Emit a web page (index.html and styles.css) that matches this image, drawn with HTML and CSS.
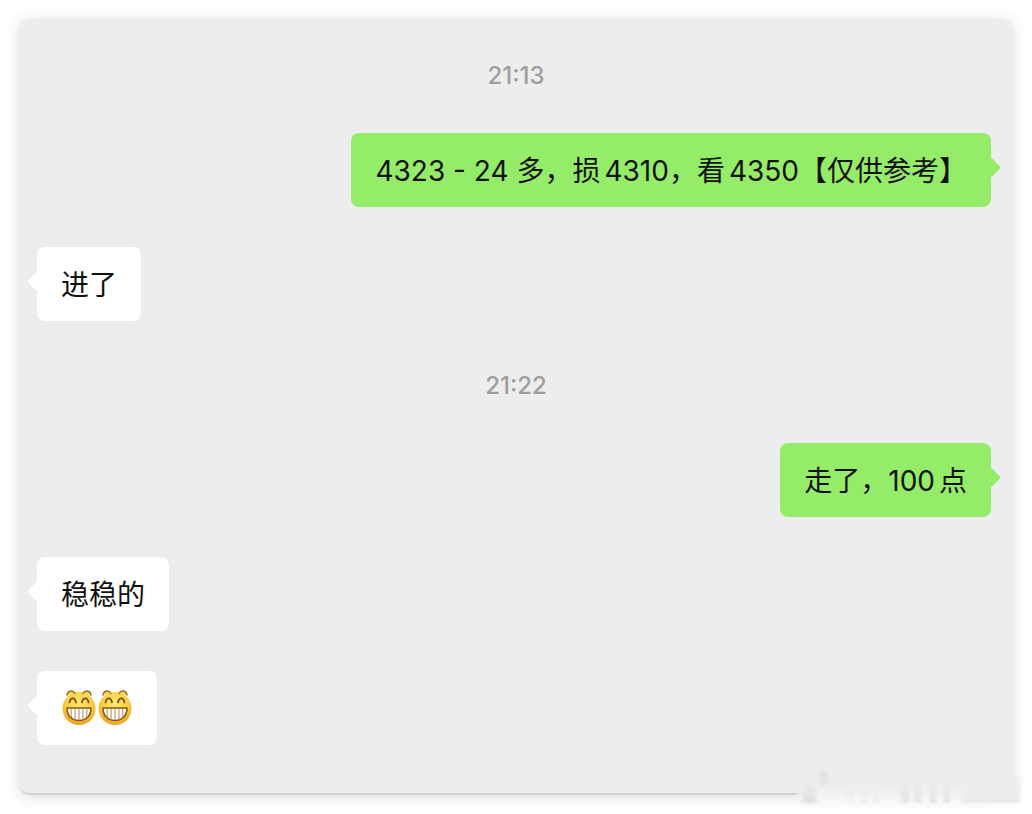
FILE: index.html
```
<!DOCTYPE html>
<html lang="zh-CN">
<head>
    <meta charset="UTF-8">
    <meta name="viewport" content="width=device-width, initial-scale=1.0">
    <title>聊天记录</title>
    <link rel="stylesheet" href="styles.css">
</head>
<body>
    <!-- shared emoji, used twice in the last message -->
    <svg class="defs" width="0" height="0" aria-hidden="true">
        <defs>
            <radialGradient id="face" cx="50%" cy="35%" r="65%">
                <stop offset="0" stop-color="#ffe873"/>
                <stop offset="0.6" stop-color="#fdcf42"/>
                <stop offset="1" stop-color="#f0a01c"/>
            </radialGradient>
            <symbol id="grin" viewBox="0 0 36 36">
                <circle cx="18" cy="18.500" r="16.5" fill="url(#face)"/>
                <path d="M6 5C7 0 12 0 14 3.500M22 3.500C24 0 29 0 30 5" fill="#fdd650" stroke="#9a6a25" stroke-width="1.400" stroke-linecap="round"/>
                <path d="M8.500 12.500C9.500 7 14 7 15 12.500M21 12.500C22 7 26.500 7 27.500 12.500" fill="none" stroke="#7b4a10" stroke-width="1.700" stroke-linecap="round"/>
                <path d="M6 18H30C30 26 25 30.500 18 30.500S6 26 6 18Z" fill="#fff" stroke="#8a5512" stroke-width="1.600" stroke-linejoin="round"/>
                <path d="M10.200 19V27M14.100 19V29.500M18 19V30M21.900 19V29.500M25.800 19V27" stroke="#c39a68" stroke-width="1.200"/>
            </symbol>
        </defs>
    </svg>

    <main class="chat">
        <time class="chat-time">21:13</time>
        <div class="message mine">
            <p class="bubble">4323 - 24 多，<span class="word">损</span>4310，<span class="word">看</span>4350【仅供参考】</p>
        </div>
        <div class="message">
            <p class="bubble">进了</p>
        </div>
        <time class="chat-time">21:22</time>
        <div class="message mine">
            <p class="bubble">走了，<span class="word">100</span>点</p>
        </div>
        <div class="message">
            <p class="bubble">稳稳的</p>
        </div>
        <div class="message">
            <p class="bubble emoji">
                <svg role="img" aria-label="呲牙"><use href="#grin"/></svg>
                <svg role="img" aria-label="呲牙"><use href="#grin"/></svg>
            </p>
        </div>

        <!-- faded stamp over the bottom corner -->
        <svg class="stamp" viewBox="0 0 232 44" aria-hidden="true">
            <defs>
                <linearGradient id="fade" x1="0" y1="0" x2="0" y2="1">
                    <stop offset="0" stop-color="#ececec"/>
                    <stop offset="0.5" stop-color="#f0f0f0"/>
                    <stop offset="1" stop-color="#f8f8f8"/>
                </linearGradient>
                <linearGradient id="bar" x1="0" y1="0" x2="0" y2="1">
                    <stop offset="0" stop-color="#ececec"/>
                    <stop offset="1" stop-color="#dfdfdf"/>
                </linearGradient>
                <filter id="soft" x="-5%" y="-10%" width="110%" height="120%">
                    <feGaussianBlur stdDeviation="2 1"/>
                </filter>
            </defs>
            <g filter="url(#soft)">
                <rect x="8" y="12" width="222" height="26" fill="url(#fade)"/>
                <path d="M12 16H26V38H12Z" fill="url(#bar)"/>
                <path d="M30 5H37V20H30Z" fill="#e2e2e2"/>
                <path d="M112 12H119V38H112ZM125 12H131V38H125ZM140 12H146V38H140ZM154 12H159V38H154Z" fill="url(#bar)"/>
                <path d="M58 16H63V38H58ZM72 16H77V38H72ZM84 16H89V38H84Z" fill="#ededed"/>
                <path d="M171 12H230V38H171Z" fill="#ededed"/>
                <path d="M171 35H230V38H171Z" fill="#e8e8e8"/>
            </g>
        </svg>
    </main>
</body>
</html>
```
FILE: styles.css
```
* {
    margin: 0;
    padding: 0;
    box-sizing: border-box;
}
body {
    background-color: #ffffff;
    font-family: Inter, "Noto Sans CJK SC", sans-serif;
    color: #111111;
}
.defs {
    position: absolute;
}
.chat {
    position: relative;
    display: flex;
    flex-direction: column;
    margin: 19px 19px 20px;
    padding: 33px 22px 48px 18px;
    background-color: #ededed;
    border-radius: 10px;
    border-bottom: 2px solid #d3d3d3;
    box-shadow: 0 2px 16px rgba(0, 0, 0, 0.14);
}
.chat-time {
    margin-bottom: 33px;
    padding-left: 4px;
    line-height: 48px;
    font-size: 24px;
    font-weight: 500;
    text-align: center;
    color: #9e9e9e;
}
.message {
    display: flex;
}
.message + .message {
    margin-top: 40px;
}
.message + .chat-time {
    margin-top: 41px;
}
.mine {
    justify-content: flex-end;
}
.bubble {
    position: relative;
    min-height: 74px;
    padding: 17px 24px 15px;
    line-height: 42px;
    font-size: 28px;
    background-color: #ffffff;
    border-radius: 8px;
}
.mine .bubble {
    background-color: #95ec69;
}
/* little arrow on the side of the bubble */
.bubble::before {
    content: "";
    position: absolute;
    top: 27px;
    left: -7px;
    width: 15px;
    height: 15px;
    background-color: inherit;
    border-radius: 3px;
    transform: rotate(45deg);
}
.mine .bubble::before {
    left: auto;
    right: -7px;
}
.word {
    margin-right: 4px;
}
.emoji {
    display: flex;
    align-items: center;
    padding: 16px 24px;
}
.emoji svg {
    width: 36px;
    height: 36px;
}
.stamp {
    position: absolute;
    right: -9px;
    bottom: -16px;
    width: 232px;
    height: 44px;
}
```
